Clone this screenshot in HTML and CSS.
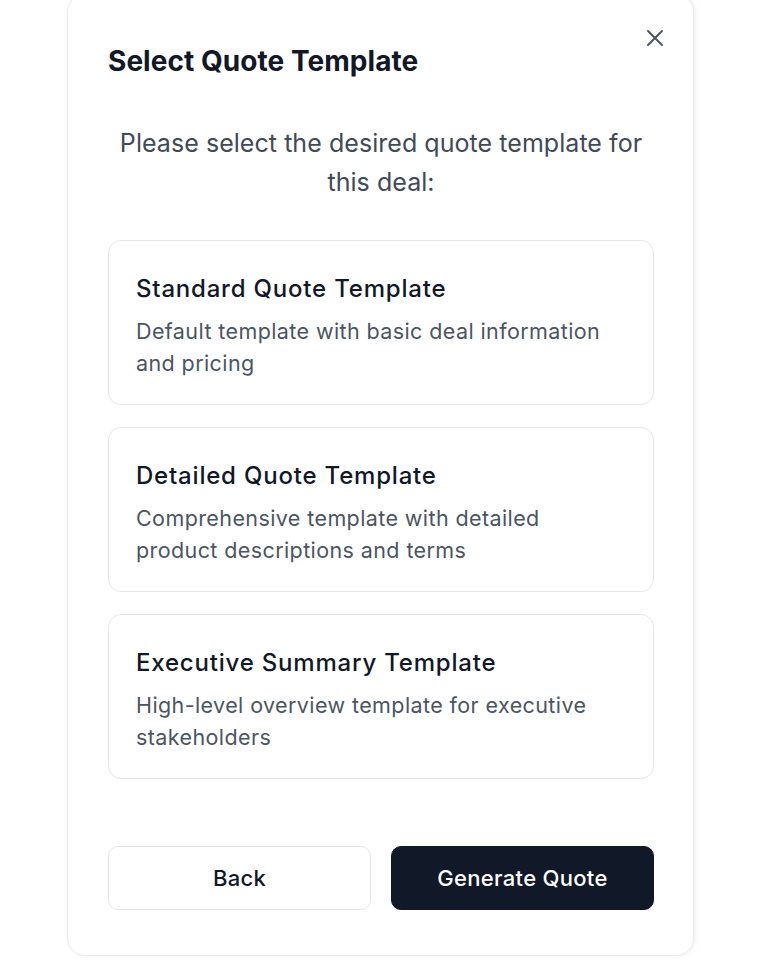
FILE: index.html
```html
<!DOCTYPE html>
<html lang="en">
<head>
<meta charset="utf-8">
<title>Select Quote Template</title>
<link rel="stylesheet" href="styles.css">
</head>
<body>
<div class="modal">
  <button class="close" aria-label="Close">
    <svg width="18" height="18" viewBox="0 0 18 18" fill="none" stroke="currentColor" stroke-width="2" stroke-linecap="round"><path d="M2 2L16 16M16 2L2 16"/></svg>
  </button>
  <h2 class="title">Select Quote Template</h2>
  <p class="intro">Please select the desired quote template for this deal:</p>
  <div class="options">
    <div class="option">
      <div class="option-title">Standard Quote Template</div>
      <div class="option-desc">Default template with basic deal information and pricing</div>
    </div>
    <div class="option">
      <div class="option-title">Detailed Quote Template</div>
      <div class="option-desc">Comprehensive template with detailed product descriptions and terms</div>
    </div>
    <div class="option">
      <div class="option-title">Executive Summary Template</div>
      <div class="option-desc">High-level overview template for executive stakeholders</div>
    </div>
  </div>
  <div class="actions">
    <button class="btn btn-outline">Back</button>
    <button class="btn btn-primary">Generate Quote</button>
  </div>
</div>
</body>
</html>
```

FILE: styles.css
```css
* { box-sizing: border-box; }
html, body { margin: 0; padding: 0; background: #ffffff; }
body {
  font-family: Inter, "Noto Sans", "Liberation Sans", sans-serif;
  overflow: hidden;
  height: 960px;
}
.modal {
  position: relative;
  margin: -6px 0 0 67px;
  width: 627px;
  background: #fff;
  border: 1px solid #ececec;
  border-radius: 18px;
  box-shadow: 1px 0 3px rgba(0,0,0,0.05), 2px 0 8px rgba(0,0,0,0.03);
  padding: 48px 39px 45px 40px;
}
.close {
  position: absolute;
  top: 32px;
  right: 27px;
  width: 22px;
  height: 22px;
  padding: 2px;
  border: 0;
  background: none;
  color: #4b5563;
  display: flex;
  align-items: center;
  justify-content: center;
}
.title {
  margin: 0;
  font-size: 28px;
  line-height: 36px;
  font-weight: 700;
  color: #111827;
  letter-spacing: 0.05px;
}
.intro {
  margin: 45px 0 0;
  text-align: center;
  font-size: 25px;
  line-height: 39px;
  letter-spacing: 0.05px;
  color: #414a57;
  padding: 0 4px;
}
.options {
  margin-top: 38px;
  display: flex;
  flex-direction: column;
  gap: 22px;
}
.option {
  border: 1px solid #e5e7eb;
  border-radius: 13px;
  padding: 30px 28px 24px 27px;
  height: 165px;
}
.option-title {
  font-size: 24px;
  line-height: 36px;
  font-weight: 500;
  letter-spacing: 0.8px;
  color: #111827;
}
.option-desc {
  margin-top: 8px;
  font-size: 21.5px;
  line-height: 32px;
  letter-spacing: 0.4px;
  color: #4b5563;
}
.actions {
  margin-top: 67px;
  display: grid;
  grid-template-columns: 1fr 1fr;
  gap: 20px;
}
.btn {
  height: 64px;
  border-radius: 10px;
  font-family: inherit;
  font-size: 22px;
  font-weight: 500;
  letter-spacing: 0.3px;
}
.btn-outline {
  background: #fff;
  border: 1px solid #e5e7eb;
  color: #111827;
}
.btn-primary {
  background: #111827;
  border: 1px solid #111827;
  color: #fff;
}
```
